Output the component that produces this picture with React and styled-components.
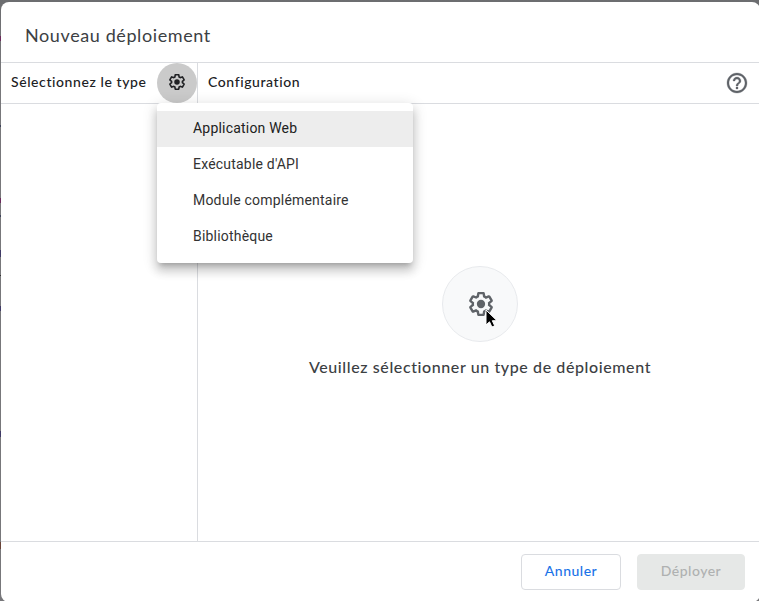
import React from "react";
import styled, { createGlobalStyle } from "styled-components";
import { MdHelpOutline } from "react-icons/md";

const GlobalStyle = createGlobalStyle`
  body { margin: 0; background: #fff; overflow: hidden; }
  * { box-sizing: border-box; }
`;

/* Dimmed page behind the dialog, with slivers of its content at the left edge */
const Backdrop = styled.div`
  width: 759px;
  height: 601px;
  padding: 2px 0 0 1px;
  overflow: hidden;
  background:
    linear-gradient(#6b2a5c, #6b2a5c) 0 36px / 1px 5px no-repeat,
    linear-gradient(#3d4258, #3d4258) 0 125px / 1px 2px no-repeat,
    linear-gradient(#6b2a5c, #6b2a5c) 0 198px / 1px 5px no-repeat,
    linear-gradient(#3d4258, #3d4258) 0 215px / 1px 2px no-repeat,
    linear-gradient(#3f3a66, #3f3a66) 0 250px / 1px 7px no-repeat,
    linear-gradient(#303030, #303030) 0 275px / 1px 1px no-repeat,
    linear-gradient(#3f3a66, #3f3a66) 0 306px / 1px 5px no-repeat,
    linear-gradient(#3f3a66, #3f3a66) 0 431px / 1px 6px no-repeat,
    linear-gradient(#694438, #694438) 0 542px / 1px 7px no-repeat,
    linear-gradient(#6c6d70, #77777a 12%, #77777a);
  font-family: Lato, "Open Sans", sans-serif;
`;

const Dialog = styled.div`
  width: 759px;
  height: 600px;
  display: flex;
  flex-direction: column;
  background: #fff;
  border-radius: 8px;
`;

const Title = styled.h1`
  margin: 0;
  height: 61px;
  flex: none;
  padding: 8px 0 0 24px;
  border-bottom: 1px solid #dadce0;
  font-size: 18px;
  font-weight: 400;
  line-height: 51px;
  letter-spacing: 0.6px;
  color: #3c4043;
`;

const Body = styled.div`
  flex: 1;
  display: grid;
  grid-template-columns: 197px 1fr;
  min-height: 0;
`;

const Column = styled.section`
  display: flex;
  flex-direction: column;
  border-right: ${(p) => (p.$divided ? "1px solid #dadce0" : "none")};
`;

const ColumnHeader = styled.header`
  height: 41px;
  flex: none;
  display: flex;
  align-items: center;
  justify-content: space-between;
  padding: 0 ${(p) => p.$end}px 0 10px;
  border-bottom: 1px solid #dadce0;
  color: #202124;
`;

const Label = styled.span`
  padding-bottom: 2px;
  font-size: 14px;
  font-weight: 500;
  line-height: 20px;
  letter-spacing: 0.59px;
  white-space: nowrap;
`;

const TypePicker = styled.div`
  position: relative;
  align-self: flex-start;
`;

const GearButton = styled.button`
  display: flex;
  align-items: center;
  justify-content: center;
  width: 40px;
  height: 40px;
  padding: 0 0 2px;
  border: 0;
  border-radius: 50%;
  background: #cacaca;
  color: #202124;
`;

const Menu = styled.ul`
  position: absolute;
  top: 100%;
  left: 0;
  z-index: 1;
  width: 256px;
  margin: 0;
  padding: 8px 0;
  list-style: none;
  border-radius: 4px;
  background: #fff;
  box-shadow: 0 5px 5px -3px rgba(0, 0, 0, 0.2), 0 8px 10px 1px rgba(0, 0, 0, 0.14),
    0 3px 14px 2px rgba(0, 0, 0, 0.12);
`;

const MenuItem = styled.li`
  height: 36px;
  padding-left: 36px;
  background: ${(p) => (p.$active ? "#ededed" : "transparent")};
  font: 400 14px/35px Roboto, sans-serif;
  letter-spacing: 0.2px;
  color: ${(p) => (p.$active ? "#212121" : "#333")};
`;

const EmptyState = styled.div`
  flex: 1;
  display: flex;
  flex-direction: column;
  align-items: center;
  padding: 162px 0 0 2px;
`;

const GearDisc = styled.div`
  position: relative;
  display: flex;
  align-items: center;
  justify-content: center;
  width: 76px;
  height: 76px;
  margin-bottom: 13px;
  padding-left: 1px;
  border: 1px solid #e8eaed;
  border-radius: 50%;
  background: #f8f9fa;
  color: #5f6368;
`;

const Cursor = styled.svg`
  position: absolute;
  left: 42px;
  top: 42px;
`;

const Message = styled.p`
  margin: 0;
  font-size: 16px;
  font-weight: 500;
  line-height: 24px;
  letter-spacing: 0.6px;
  color: #3c4043;
`;

const Footer = styled.footer`
  height: 61px;
  flex: none;
  display: flex;
  gap: 16px;
  justify-content: flex-end;
  padding: 12px 15px 0;
  border-top: 1px solid #dadce0;
`;

const Button = styled.button`
  width: ${(p) => (p.disabled ? 108 : 100)}px;
  height: 36px;
  padding: 0 0 2px;
  border: 1px solid ${(p) => (p.disabled ? "#e6e8e7" : "#dadce0")};
  border-radius: 4px;
  background: ${(p) => (p.disabled ? "#e6e8e7" : "#fff")};
  color: ${(p) => (p.disabled ? "#afb1b1" : "#1a73e8")};
  font: 500 14px/20px Lato, sans-serif;
  letter-spacing: 0.5px;
`;

const HelpIcon = styled(MdHelpOutline)`
  color: #5f6368;

  path {
    stroke-width: 0.3;
  }

  path[fill="none"] {
    stroke: none;
  }
`;

const Gear = ({ size }) => (
  <svg width={size} height={size} viewBox="1 1 22 22" fill="none" stroke="currentColor" strokeWidth="2.2">
    <path d="M19.43 12.98c.04-.32.07-.64.07-.98 0-.34-.03-.66-.07-.98l2.11-1.65c.19-.15.24-.42.12-.64l-2-3.46c-.09-.16-.26-.25-.44-.25-.06 0-.12.01-.17.03l-2.49 1c-.52-.4-1.08-.73-1.69-.98l-.38-2.65C14.46 2.18 14.25 2 14 2h-4c-.25 0-.46.18-.49.42l-.38 2.65c-.61.25-1.17.59-1.69.98l-2.49-1c-.06-.02-.12-.03-.18-.03-.17 0-.34.09-.43.25l-2 3.46c-.13.22-.07.49.12.64l2.11 1.65c-.04.32-.07.65-.07.98 0 .33.03.66.07.98l-2.11 1.65c-.19.15-.24.42-.12.64l2 3.46c.09.16.26.25.44.25.06 0 .12-.01.17-.03l2.49-1c.52.4 1.08.73 1.69.98l.38 2.65c.03.24.24.42.49.42h4c.25 0 .46-.18.49-.42l.38-2.65c.61-.25 1.17-.59 1.69-.98l2.49 1c.06.02.12.03.18.03.17 0 .34-.09.43-.25l2-3.46c.12-.22.07-.49-.12-.64l-2.11-1.65z" />
    <circle cx="12" cy="12" r="3.8" fill="currentColor" stroke="none" />
  </svg>
);

const types = ["Application Web", "Exécutable d'API", "Module complémentaire", "Bibliothèque"];

export default function App() {
  return (
    <>
      <GlobalStyle />
      <Backdrop>
        <Dialog role="dialog">
          <Title>Nouveau déploiement</Title>
          <Body>
            <Column $divided>
              <ColumnHeader $end={0}>
                <Label>Sélectionnez le type</Label>
                <TypePicker>
                  <GearButton aria-label="Type">
                    <Gear size={16} />
                  </GearButton>
                  <Menu>
                    {types.map((type, i) => (
                      <MenuItem key={type} $active={i === 0}>{type}</MenuItem>
                    ))}
                  </Menu>
                </TypePicker>
              </ColumnHeader>
            </Column>
            <Column>
              <ColumnHeader $end={11}>
                <Label>Configuration</Label>
                <HelpIcon size={24} />
              </ColumnHeader>
              <EmptyState>
                <GearDisc>
                  <Gear size={24} />
                  <Cursor width="14" height="20" viewBox="0 0 14 20">
                    <path d="M1 1v15l3.5-3.2 2.4 5.2 2.8-1.2-2.4-5.1H12z" fill="#000" stroke="#fff" />
                  </Cursor>
                </GearDisc>
                <Message>Veuillez sélectionner un type de déploiement</Message>
              </EmptyState>
            </Column>
          </Body>
          <Footer>
            <Button>Annuler</Button>
            <Button disabled>Déployer</Button>
          </Footer>
        </Dialog>
      </Backdrop>
    </>
  );
}
